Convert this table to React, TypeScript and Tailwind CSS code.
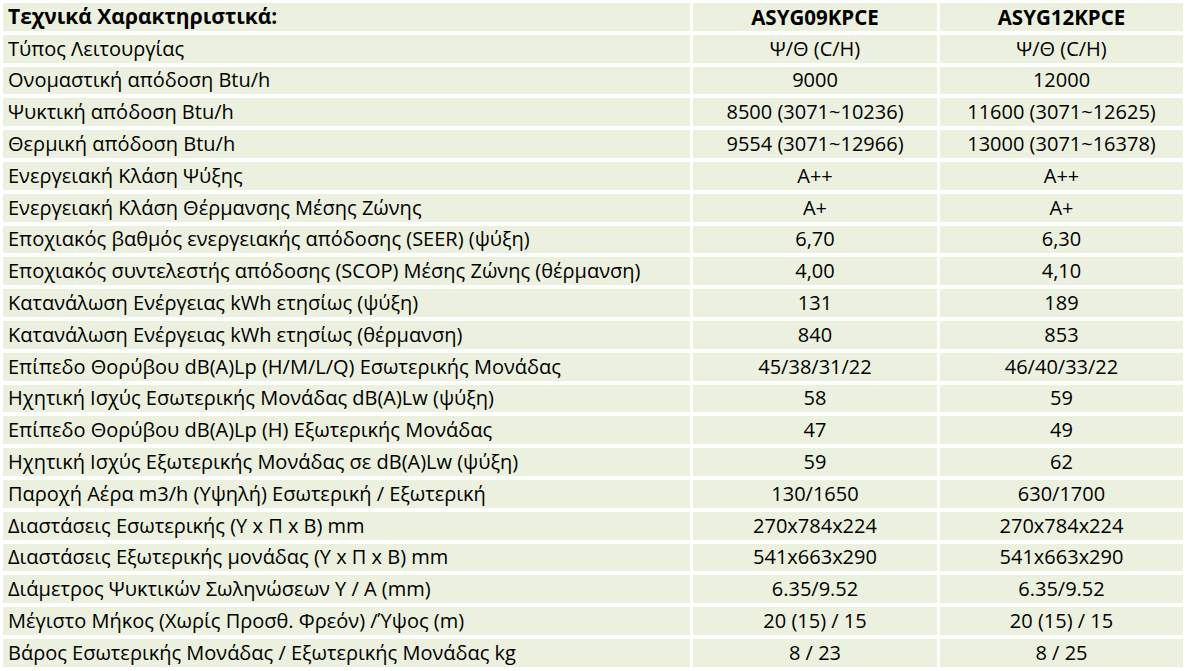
import React from "react";

const rows: [string, string, string][] = [
  ["Τύπος Λειτουργίας", "Ψ/Θ (C/H)", "Ψ/Θ (C/H)"],
  ["Ονομαστική απόδοση Btu/h", "9000", "12000"],
  ["Ψυκτική απόδοση Btu/h", "8500 (3071~10236)", "11600 (3071~12625)"],
  ["Θερμική απόδοση Btu/h", "9554 (3071~12966)", "13000 (3071~16378)"],
  ["Ενεργειακή Κλάση Ψύξης", "A++", "A++"],
  ["Ενεργειακή Κλάση Θέρμανσης Μέσης Ζώνης", "A+", "A+"],
  ["Εποχιακός βαθμός ενεργειακής απόδοσης (SEER) (ψύξη)", "6,70", "6,30"],
  ["Εποχιακός συντελεστής απόδοσης (SCOP) Μέσης Ζώνης (θέρμανση)", "4,00", "4,10"],
  ["Κατανάλωση Ενέργειας kWh ετησίως (ψύξη)", "131", "189"],
  ["Κατανάλωση Ενέργειας kWh ετησίως (θέρμανση)", "840", "853"],
  ["Επίπεδο Θορύβου dB(A)Lp (H/M/L/Q) Εσωτερικής Μονάδας", "45/38/31/22", "46/40/33/22"],
  ["Ηχητική Ισχύς Εσωτερικής Μονάδας dB(A)Lw (ψύξη)", "58", "59"],
  ["Επίπεδο Θορύβου dB(A)Lp (H) Εξωτερικής Μονάδας", "47", "49"],
  ["Ηχητική Ισχύς Εξωτερικής Μονάδας σε dB(A)Lw (ψύξη)", "59", "62"],
  ["Παροχή Αέρα m3/h (Υψηλή) Εσωτερική / Εξωτερική", "130/1650", "630/1700"],
  ["Διαστάσεις Εσωτερικής (Υ x Π x Β) mm", "270x784x224", "270x784x224"],
  ["Διαστάσεις Εξωτερικής μονάδας (Υ x Π x Β) mm", "541x663x290", "541x663x290"],
  ["Διάμετρος Ψυκτικών Σωληνώσεων Υ / Α (mm)", "6.35/9.52", "6.35/9.52"],
  ["Μέγιστο Μήκος (Χωρίς Προσθ. Φρεόν) /Ύψος (m)", "20 (15) / 15", "20 (15) / 15"],
  ["Βάρος Εσωτερικής Μονάδας / Εξωτερικής Μονάδας kg", "8 / 23", "8 / 25"],
];

export default function App() {
  return (
    <div
      className="w-[1190px] h-[671px] bg-white pt-[3px] pl-[3px] text-black text-[20px] leading-none overflow-hidden"
      style={{ fontFamily: '"Open Sans", "Noto Sans", sans-serif' }}
    >
      <div className="grid grid-cols-[687px_244px_243px] gap-x-[3px] gap-y-[4px] auto-rows-[27.8px]">
        <div className="bg-[#ebf1de] flex items-center pl-[5px] font-bold text-[21px]">
          Τεχνικά Χαρακτηριστικά:
        </div>
        <div className="bg-[#ebf1de] flex items-center justify-center font-bold text-[20.5px]">
          ASYG09KPCE
        </div>
        <div className="bg-[#ebf1de] flex items-center justify-center font-bold text-[20.5px]">
          ASYG12KPCE
        </div>
        {rows.map((r, i) => (
          <React.Fragment key={i}>
            <div className="bg-[#ebf1de] flex items-center pl-[5px] whitespace-nowrap">{r[0]}</div>
            <div className="bg-[#ebf1de] flex items-center justify-center whitespace-nowrap">{r[1]}</div>
            <div className="bg-[#ebf1de] flex items-center justify-center whitespace-nowrap">{r[2]}</div>
          </React.Fragment>
        ))}
      </div>
    </div>
  );
}
